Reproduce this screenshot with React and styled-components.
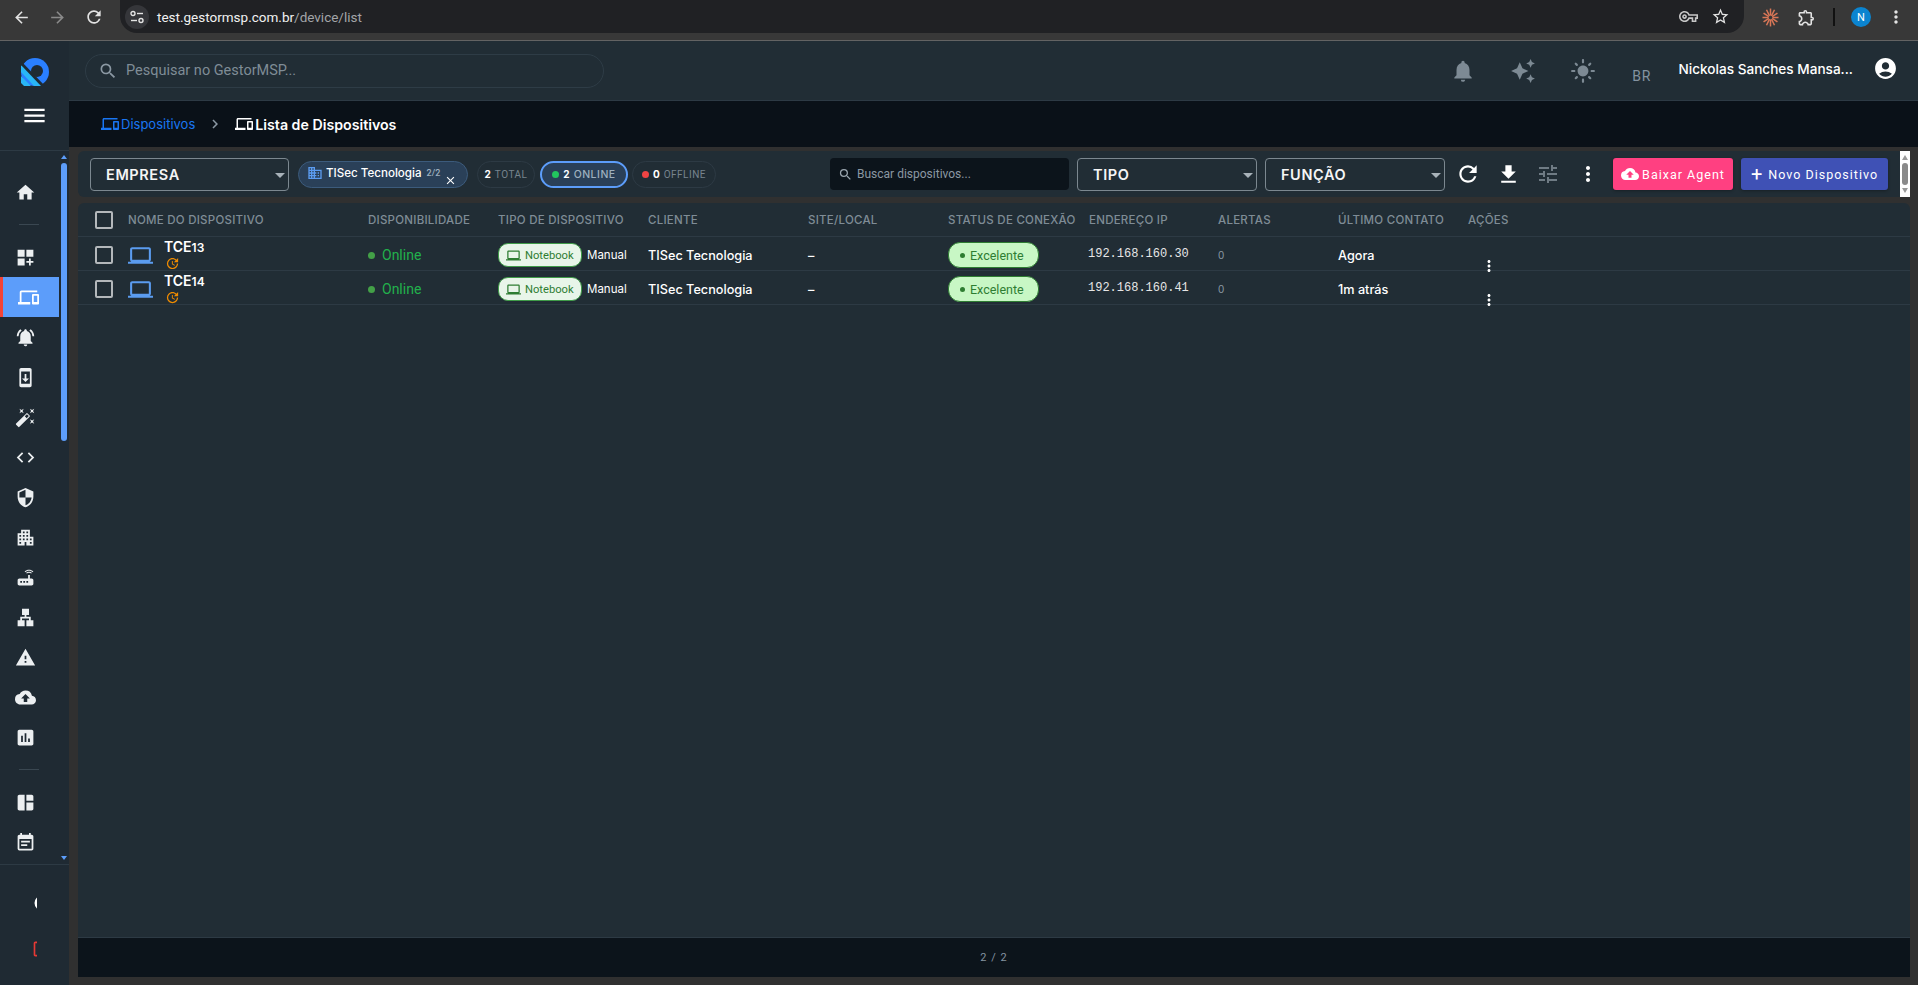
import React from "react";
import styled, { createGlobalStyle } from "styled-components";
import {
  MdAccountCircle,
  MdApartment,
  MdArrowBack,
  MdArrowForward,
  MdAssessment,
  MdAutoAwesome,
  MdAutoFixHigh,
  MdChevronRight,
  MdClose,
  MdCloudUpload,
  MdCode,
  MdDarkMode,
  MdDashboardCustomize,
  MdDevices,
  MdDomain,
  MdEventNote,
  MdFileDownload,
  MdHome,
  MdLan,
  MdLaptop,
  MdLightMode,
  MdLogout,
  MdMenu,
  MdMoreVert,
  MdNotifications,
  MdNotificationsActive,
  MdOutlineExtension,
  MdOutlineVpnKey,
  MdRefresh,
  MdRouter,
  MdSearch,
  MdSecurity,
  MdSpaceDashboard,
  MdStarBorder,
  MdSystemUpdate,
  MdTune,
  MdUpdate,
  MdWarning,
} from "react-icons/md";

const display = `"Inter", "Liberation Sans", sans-serif`;
const plain = `"Roboto", "Liberation Sans", sans-serif`;

const GlobalStyle = createGlobalStyle`
  html, body { margin: 0; padding: 0; height: 100%; background: #303030; overflow: hidden; }
  #root { height: 100%; }
  * { box-sizing: border-box; }
`;

const columns = "50px 240px 130px 150px 160px 140px 141px 129px 120px 130px 1fr";

const navTop = [
  { Icon: MdDashboardCustomize },
  { Icon: MdDevices, active: true },
  { Icon: MdNotificationsActive },
  { Icon: MdSystemUpdate },
  { Icon: MdAutoFixHigh },
  { Icon: MdCode },
  { Icon: MdSecurity },
  { Icon: MdApartment },
  { Icon: MdRouter },
  { Icon: MdLan },
  { Icon: MdWarning },
  { Icon: MdCloudUpload },
  { Icon: MdAssessment },
];

const devices = [
  { name: "TCE", num: "13", ip: "192.168.160.30", last: "Agora" },
  { name: "TCE", num: "14", ip: "192.168.160.41", last: "1m atrás" },
];

function Logo() {
  return (
    <svg width="28" height="28" viewBox="0 0 28 28">
      <circle cx="14" cy="14" r="14" fill="#2a7fff" />
      <path d="M0 3 L24 28 L16 28 L0 11 Z" fill="#1f2a33" />
      <circle cx="16" cy="13" r="6" fill="#1f2a33" />
      <path d="M0 7 L20 28 L13 28 L0 14 Z" fill="#29b6f6" />
      <path d="M0 18 L10 28 L3 28 L0 25 Z" fill="#29b6f6" />
      <path d="M0 0 L8 0 L0 8 Z" fill="#1f2a33" />
    </svg>
  );
}

function Burst() {
  const rays = Array.from({ length: 12 }, (_, i) => (i * Math.PI) / 6);
  return (
    <svg width="17" height="19" viewBox="0 0 18 20">
      {rays.map((a) => (
        <line
          key={a}
          x1={9 + Math.cos(a) * 2}
          y1={10 + Math.sin(a) * 2}
          x2={9 + Math.cos(a) * 8.5}
          y2={10 + Math.sin(a) * 9.5}
          stroke="#d97757"
          strokeWidth="1.6"
        />
      ))}
    </svg>
  );
}

function SiteTune() {
  return (
    <svg width="14" height="14" viewBox="0 0 14 14" fill="none" stroke="#e3e3e3" strokeWidth="1.4">
      <circle cx="3" cy="3.5" r="2" />
      <path d="M7 3.5 H13" />
      <circle cx="11" cy="10.5" r="2" />
      <path d="M1 10.5 H7" />
    </svg>
  );
}

export default function App() {
  return (
    <>
      <GlobalStyle />
      <Root>
        <ChromeBar>
          <ChromeNav>
            <MdArrowBack size={19} color="#e3e3e3" />
            <MdArrowForward size={19} color="#8a8a8a" />
            <MdRefresh size={20} color="#e3e3e3" />
          </ChromeNav>
          <Omnibox>
            <SiteInfo>
              <SiteTune />
            </SiteInfo>
            <Url>
              test.gestormsp.com.br<UrlPath>/device/list</UrlPath>
            </Url>
            <OmniActions>
              <MdOutlineVpnKey size={19} color="#c7c7c7" />
              <MdStarBorder size={19} color="#e3e3e3" />
            </OmniActions>
          </Omnibox>
          <ChromeTools>
            <Burst />
            <MdOutlineExtension size={19} color="#e3e3e3" />
            <ChromeDivider />
            <Avatar>N</Avatar>
            <MdMoreVert size={20} color="#e3e3e3" />
          </ChromeTools>
        </ChromeBar>
        <Body>
          <Sidebar>
            <SideHead>
              <Logo />
              <MdMenu size={27} color="#fff" />
            </SideHead>
            <SideScroll>
              <SideList>
                <SideItem>
                  <MdHome size={21} />
                </SideItem>
                <SideRule />
                {navTop.map(({ Icon, active }, i) => (
                  <SideItem key={i} $active={active}>
                    <Icon size={21} />
                  </SideItem>
                ))}
                <SideRule />
                <SideItem>
                  <MdSpaceDashboard size={21} />
                </SideItem>
                <SideItem>
                  <MdEventNote size={21} />
                </SideItem>
              </SideList>
              <ScrollTrack>
                <ArrowUp />
                <SideThumb />
                <ArrowDown />
              </ScrollTrack>
            </SideScroll>
            <SideFoot>
              <ClippedIcon>
                <MdDarkMode size={20} color="#fff" />
              </ClippedIcon>
              <ClippedIcon>
                <MdLogout size={20} color="#e53935" />
              </ClippedIcon>
            </SideFoot>
          </Sidebar>
          <Main>
            <TopBar>
              <SearchPill>
                <MdSearch size={20} color="#8b98a3" />
                <span>Pesquisar no GestorMSP...</span>
              </SearchPill>
              <TopIcons>
                <MdNotifications size={26} color="#7d8a94" />
                <MdAutoAwesome size={26} color="#7d8a94" />
                <MdLightMode size={26} color="#7d8a94" />
                <Lang>BR</Lang>
                <UserName>Nickolas Sanches Mansa...</UserName>
                <ProfileIcon size={25} color="#fff" />
              </TopIcons>
            </TopBar>
            <Breadcrumb>
              <Crumb $link>
                <MdDevices size={18} />
                Dispositivos
              </Crumb>
              <MdChevronRight size={18} color="#8b98a3" />
              <Crumb>
                <MdDevices size={18} />
                Lista de Dispositivos
              </Crumb>
            </Breadcrumb>
            <Content>
              <Toolbar>
                <SelectBox $width={199}>EMPRESA</SelectBox>
                <CompanyChip>
                  <MdDomain size={16} color="#5b9cf0" />
                  <span>TISec Tecnologia</span>
                  <ChipCount>2/2</ChipCount>
                  <ChipClose>
                    <MdClose size={13} />
                  </ChipClose>
                </CompanyChip>
                <StatChip $width={58} $left={9}>
                  <StatNum>2</StatNum>
                  <StatLabel>TOTAL</StatLabel>
                </StatChip>
                <StatChip $width={88} $left={5} $selected>
                  <Dot $color="#22c55e" />
                  <StatNum>2</StatNum>
                  <StatLabel $strong>ONLINE</StatLabel>
                </StatChip>
                <StatChip $width={84} $left={4}>
                  <Dot $color="#ef4444" />
                  <StatNum>0</StatNum>
                  <StatLabel>OFFLINE</StatLabel>
                </StatChip>
                <DeviceSearch>
                  <MdSearch size={15} color="#9aa5ae" />
                  <span>Buscar dispositivos...</span>
                </DeviceSearch>
                <SelectBox $width={180} $left={8}>TIPO</SelectBox>
                <SelectBox $width={180} $left={8}>FUNÇÃO</SelectBox>
                <ToolIcons>
                  <ToolIcon>
                    <MdRefresh size={26} color="#fff" />
                  </ToolIcon>
                  <ToolIcon>
                    <MdFileDownload size={25} color="#fff" />
                  </ToolIcon>
                  <ToolIcon>
                    <MdTune size={24} color="#6f7b84" />
                  </ToolIcon>
                  <ToolIcon>
                    <MdMoreVert size={24} color="#fff" />
                  </ToolIcon>
                </ToolIcons>
                <ActionButton $bg="#ff4081" $width={120}>
                  <MdCloudUpload size={18} />
                  Baixar Agent
                </ActionButton>
                <ActionButton $bg="#3f51b5" $width={147}>
                  <PlusSign>+</PlusSign>
                  Novo Dispositivo
                </ActionButton>
                <MiniScroll>
                  <MiniArrow $up />
                  <MiniThumb />
                  <MiniArrow />
                </MiniScroll>
              </Toolbar>
              <TablePanel>
                <HeadRow>
                  <CheckCell>
                    <Check />
                  </CheckCell>
                  <HeadCell>Nome do Dispositivo</HeadCell>
                  <HeadCell>Disponibilidade</HeadCell>
                  <HeadCell>Tipo de Dispositivo</HeadCell>
                  <HeadCell>Cliente</HeadCell>
                  <HeadCell>Site/Local</HeadCell>
                  <HeadCell>Status de Conexão</HeadCell>
                  <HeadCell>Endereço IP</HeadCell>
                  <HeadCell>Alertas</HeadCell>
                  <HeadCell>Último Contato</HeadCell>
                  <HeadCell>Ações</HeadCell>
                </HeadRow>
                {devices.map((d) => (
                  <Row key={d.ip}>
                    <CheckCell>
                      <Check />
                    </CheckCell>
                    <NameCell>
                      <MdLaptop size={25} color="#5b9cf0" />
                      <NameStack>
                        <DeviceName>
                          {d.name}
                          <small>{d.num}</small>
                        </DeviceName>
                        <MdUpdate size={15} color="#f08c00" />
                      </NameStack>
                    </NameCell>
                    <OnlineCell>
                      <Dot $color="#43a047" />
                      Online
                    </OnlineCell>
                    <TypeCell>
                      <TypePill>
                        <MdLaptop size={15} />
                        Notebook
                      </TypePill>
                      <BodyText>Manual</BodyText>
                    </TypeCell>
                    <TextCell>TISec Tecnologia</TextCell>
                    <TextCell>–</TextCell>
                    <div>
                      <StatusPill>
                        <Dot $color="#2e7d32" $small />
                        Excelente
                      </StatusPill>
                    </div>
                    <IpCell>{d.ip}</IpCell>
                    <AlertCell>0</AlertCell>
                    <TextCell>{d.last}</TextCell>
                    <MenuCell>
                      <MdMoreVert size={18} color="#fff" />
                    </MenuCell>
                  </Row>
                ))}
                <Spacer />
                <Footer>2 / 2</Footer>
              </TablePanel>
            </Content>
          </Main>
        </Body>
      </Root>
    </>
  );
}

const Root = styled.div`
  display: flex;
  flex-direction: column;
  height: 985px;
  background: #303030;
  font-family: ${plain};
`;

const ChromeBar = styled.div`
  display: flex;
  align-items: flex-start;
  height: 41px;
  flex: none;
  background: #383838;
  border-bottom: 1px solid #636363;
`;

const ChromeNav = styled.div`
  display: flex;
  align-items: center;
  gap: 17px;
  width: 120px;
  height: 34px;
  padding-left: 12px;
`;

const Omnibox = styled.div`
  display: flex;
  align-items: center;
  width: 1624px;
  height: 33px;
  padding: 0 14px 0 5px;
  background: #202124;
  border-radius: 0 0 17px 17px;
`;

const SiteInfo = styled.div`
  display: flex;
  align-items: center;
  justify-content: center;
  width: 24px;
  height: 24px;
  border-radius: 50%;
  background: #35363a;
`;

const Url = styled.div`
  margin-left: 8px;
  color: #f1f1f1;
  font-size: 13.5px;
`;

const UrlPath = styled.span`
  color: #a3a5a8;
`;

const OmniActions = styled.div`
  display: flex;
  align-items: center;
  gap: 13px;
  margin-left: auto;
`;

const ChromeTools = styled.div`
  display: flex;
  align-items: center;
  height: 34px;
  padding-left: 18px;
  gap: 18px;
`;

const ChromeDivider = styled.div`
  width: 2px;
  height: 18px;
  margin: 0 -2px 0 -1px;
  background: #111;
`;

const Avatar = styled.div`
  display: flex;
  align-items: center;
  justify-content: center;
  width: 20px;
  height: 20px;
  margin-right: -3px;
  border-radius: 50%;
  background: #0b84d0;
  color: #fff;
  font-size: 11px;
`;

const Body = styled.div`
  display: flex;
  flex: 1;
  min-height: 0;
`;

const Sidebar = styled.aside`
  display: flex;
  flex-direction: column;
  width: 69px;
  flex: none;
  background: #1f2a33;
`;

const SideHead = styled.div`
  display: flex;
  flex-direction: column;
  align-items: center;
  gap: 16px;
  height: 110px;
  padding-top: 17px;
  flex: none;
  border-bottom: 1px solid #2d3a44;
`;

const SideScroll = styled.div`
  display: flex;
  height: 714px;
  flex: none;
  border-bottom: 1px solid #2d3a44;
  overflow: hidden;
`;

const SideList = styled.div`
  display: flex;
  flex-direction: column;
  width: 61px;
  padding-top: 21px;
`;

const SideItem = styled.div`
  display: flex;
  align-items: center;
  justify-content: center;
  flex: none;
  width: 59px;
  height: 40px;
  padding-right: ${(p) => (p.$active ? "6px" : "9px")};
  color: #eceff1;
  background: ${(p) => (p.$active ? "#5c9dfa" : "transparent")};
  border-left: ${(p) => (p.$active ? "3px solid #f44336" : "none")};
  svg {
    color: ${(p) => (p.$active ? "#fff" : "#eceff1")};
  }
`;

const SideRule = styled.div`
  flex: none;
  width: 20px;
  height: 1px;
  margin: 12px 0 12px 19px;
  background: #3a4751;
`;

const ScrollTrack = styled.div`
  display: flex;
  flex-direction: column;
  align-items: center;
  width: 6px;
  padding-top: 4px;
`;

const ArrowUp = styled.div`
  border-left: 3px solid transparent;
  border-right: 3px solid transparent;
  border-bottom: 4px solid #5c9dfa;
`;

const ArrowDown = styled.div`
  margin-top: auto;
  margin-bottom: 4px;
  border-left: 3px solid transparent;
  border-right: 3px solid transparent;
  border-top: 4px solid #5c9dfa;
`;

const SideThumb = styled.div`
  width: 6px;
  height: 278px;
  margin-top: 4px;
  border-radius: 3px;
  background: #5c9dfa;
`;

const SideFoot = styled.div`
  display: flex;
  flex-direction: column;
  gap: 26px;
  padding-top: 28px;
`;

const ClippedIcon = styled.div`
  width: 5px;
  height: 20px;
  margin-left: 32px;
  overflow: hidden;
  svg {
    display: block;
  }
`;

const Main = styled.main`
  display: flex;
  flex-direction: column;
  flex: 1;
  min-width: 0;
`;

const TopBar = styled.header`
  display: flex;
  align-items: center;
  height: 60px;
  flex: none;
  padding-left: 16px;
  background: #212d35;
  border-bottom: 1px solid #2d3a44;
`;

const SearchPill = styled.div`
  display: flex;
  align-items: center;
  gap: 8px;
  width: 519px;
  height: 34px;
  padding-left: 12px;
  border: 1px solid #2e3c46;
  border-radius: 17px;
  color: #7f8c96;
  font-size: 14.5px;
`;

const TopIcons = styled.div`
  display: flex;
  align-items: center;
  margin-left: auto;
  padding-right: 20px;
  gap: 34px;
`;

const Lang = styled.div`
  margin: 10px -7px 0 2px;
  color: #8493a0;
  font-size: 14px;
  letter-spacing: 1px;
`;

const UserName = styled.div`
  margin: -4px -14px 0 0;
  color: #fff;
  font-family: ${display};
  font-size: 13.6px;
  font-weight: 500;
`;

const ProfileIcon = styled(MdAccountCircle)`
  margin-top: -4px;
`;

const Breadcrumb = styled.nav`
  display: flex;
  align-items: center;
  height: 46px;
  flex: none;
  padding-left: 32px;
  gap: 11px;
  background: #0a1118;
`;

const Crumb = styled.div`
  display: flex;
  align-items: center;
  gap: 2px;
  color: ${(p) => (p.$link ? "#1976f2" : "#fff")};
  font-family: ${display};
  font-size: ${(p) => (p.$link ? "13px" : "14.2px")};
  font-weight: ${(p) => (p.$link ? 400 : 600)};
`;

const Content = styled.div`
  display: flex;
  flex-direction: column;
  flex: 1;
  min-height: 0;
  gap: 6px;
  padding: 4px 8px 8px 9px;
`;

const Toolbar = styled.div`
  display: flex;
  align-items: center;
  height: 46px;
  flex: none;
  padding-left: 12px;
  background: #212d35;
  border-radius: 6px;
`;

const SelectBox = styled.div`
  position: relative;
  display: flex;
  align-items: center;
  flex: none;
  width: ${(p) => p.$width}px;
  height: 33px;
  margin-left: ${(p) => p.$left || 0}px;
  padding-left: 15px;
  border: 1px solid #7c8890;
  border-radius: 4px;
  color: #f5f5f5;
  font-family: ${display};
  font-size: 14.5px;
  font-weight: 600;
  letter-spacing: 0.6px;
  &::after {
    content: "";
    position: absolute;
    right: 3px;
    top: 14px;
    border-left: 5px solid transparent;
    border-right: 5px solid transparent;
    border-top: 5px solid #a8b2b9;
  }
`;

const CompanyChip = styled.div`
  position: relative;
  display: flex;
  align-items: center;
  flex: none;
  gap: 3px;
  width: 170px;
  height: 27px;
  margin-left: 9px;
  padding: 0 0 2px 8px;
  background: #2a4058;
  border: 1px solid #3c5b7c;
  border-radius: 14px;
  color: #fff;
  font-family: ${display};
  font-size: 11.6px;
  font-weight: 500;
  white-space: nowrap;
`;

const ChipCount = styled.span`
  margin-left: 2px;
  color: #9fb0bf;
  font-family: ${plain};
  font-size: 9px;
`;

const ChipClose = styled.span`
  position: absolute;
  right: 10px;
  bottom: 0;
  display: flex;
  color: #fff;
`;

const StatChip = styled.div`
  display: flex;
  align-items: center;
  justify-content: center;
  flex: none;
  gap: 4px;
  width: ${(p) => p.$width}px;
  height: 27px;
  margin-left: ${(p) => p.$left}px;
  background: ${(p) => (p.$selected ? "#2a4058" : "transparent")};
  border: ${(p) => (p.$selected ? "2px solid #5c9dfa" : "1px solid #2d3a44")};
  border-radius: 14px;
`;

const StatNum = styled.span`
  color: #fff;
  font-family: ${display};
  font-size: 10px;
  font-weight: 700;
`;

const StatLabel = styled.span`
  color: ${(p) => (p.$strong ? "#9fb0bf" : "#77848e")};
  font-family: ${(p) => (p.$strong ? display : plain)};
  font-size: ${(p) => (p.$strong ? "10.5px" : "10px")};
  font-weight: ${(p) => (p.$strong ? 500 : 400)};
  letter-spacing: 0.5px;
`;

const Dot = styled.span`
  display: inline-block;
  flex: none;
  width: ${(p) => (p.$small ? "5px" : "7px")};
  height: ${(p) => (p.$small ? "5px" : "7px")};
  border-radius: 50%;
  background: ${(p) => p.$color};
`;

const DeviceSearch = styled.div`
  display: flex;
  align-items: center;
  flex: none;
  gap: 4px;
  width: 239px;
  height: 32px;
  margin-left: 114px;
  padding-left: 8px;
  background: #0c141b;
  border-radius: 4px;
  color: #8b98a3;
  font-size: 12px;
`;

const ToolIcons = styled.div`
  display: flex;
  margin: 0 5px 0 3px;
`;

const ToolIcon = styled.div`
  display: flex;
  align-items: center;
  justify-content: center;
  width: 40px;
  height: 32px;
`;

const ActionButton = styled.div`
  display: flex;
  align-items: center;
  justify-content: center;
  flex: none;
  gap: 3px;
  width: ${(p) => p.$width}px;
  height: 32px;
  margin-right: 8px;
  background: ${(p) => p.$bg};
  border-radius: 3px;
  color: #fff;
  font-size: 12.5px;
  font-weight: 400;
  letter-spacing: 1px;
  box-shadow: 0 1px 3px rgba(0, 0, 0, 0.3);
`;

const PlusSign = styled.span`
  font-size: 20px;
  font-weight: 400;
  line-height: 1;
  margin-right: 2px;
`;

const MiniScroll = styled.div`
  display: flex;
  flex-direction: column;
  align-items: center;
  justify-content: space-between;
  align-self: stretch;
  width: 10px;
  margin-left: auto;
  padding: 4px 0;
  background: #fff;
`;

const MiniArrow = styled.div`
  border-left: 3px solid transparent;
  border-right: 3px solid transparent;
  border-top: ${(p) => (p.$up ? "none" : "5px solid #9a9a9a")};
  border-bottom: ${(p) => (p.$up ? "5px solid #9a9a9a" : "none")};
`;

const MiniThumb = styled.div`
  width: 6px;
  height: 22px;
  border-radius: 3px;
  background: #8a8a8a;
`;

const TablePanel = styled.section`
  display: flex;
  flex-direction: column;
  flex: 1;
  min-height: 0;
  background: #212d35;
  border-radius: 6px 6px 0 0;
  overflow: hidden;
`;

const HeadRow = styled.div`
  display: grid;
  grid-template-columns: ${columns};
  align-items: center;
  height: 34px;
  flex: none;
  border-bottom: 1px solid #2d3a44;
`;

const Row = styled(HeadRow)`
  padding-top: 2px;
`;

const HeadCell = styled.div`
  color: #7f8c96;
  font-family: ${display};
  font-size: 11.5px;
  font-weight: 500;
  letter-spacing: 0.25px;
  text-transform: uppercase;
  white-space: nowrap;
`;

const CheckCell = styled.div`
  display: flex;
  padding-left: 17px;
`;

const Check = styled.div`
  width: 18px;
  height: 18px;
  border: 2px solid #b4b8bb;
  border-radius: 2px;
`;

const NameCell = styled.div`
  display: flex;
  align-items: center;
  gap: 11px;
`;

const NameStack = styled.div`
  display: flex;
  flex-direction: column;
  align-items: flex-start;
  margin-top: -1px;
  svg {
    margin-left: 1px;
  }
`;

const DeviceName = styled.div`
  color: #fff;
  font-family: ${display};
  font-size: 14px;
  font-weight: 600;
  line-height: 17px;
  small {
    font-size: 12px;
  }
`;

const OnlineCell = styled.div`
  display: flex;
  align-items: center;
  gap: 7px;
  color: #22b14c;
  font-size: 14px;
`;

const TypeCell = styled.div`
  display: flex;
  align-items: center;
  gap: 5px;
`;

const TypePill = styled.div`
  display: flex;
  align-items: center;
  gap: 4px;
  flex: none;
  width: 84px;
  height: 24px;
  padding-left: 7px;
  background: #e8f5e9;
  border: 1px solid #3f9b48;
  border-radius: 10px;
  color: #2e7d32;
  font-size: 11.2px;
`;

const BodyText = styled.span`
  color: #fff;
  font-family: ${display};
  font-size: 11.5px;
`;

const TextCell = styled.div`
  color: #fff;
  font-family: ${display};
  font-size: 12.7px;
  font-weight: 500;
  white-space: nowrap;
`;

const StatusPill = styled.div`
  display: inline-flex;
  align-items: center;
  gap: 5px;
  width: 91px;
  height: 26px;
  padding-left: 11px;
  background: #c8f7c5;
  border: 1px solid #2e7d32;
  border-radius: 12px;
  color: #2e7d32;
  font-size: 12.5px;
`;

const IpCell = styled.div`
  margin: -3px 0 0 -1px;
  color: #e6e6e6;
  font-family: "Liberation Mono", monospace;
  font-size: 12px;
`;

const AlertCell = styled.div`
  color: #8a98a3;
  font-family: ${display};
  font-size: 10px;
`;

const MenuCell = styled.div`
  display: flex;
  align-self: end;
  margin-bottom: -4px;
  padding-left: 12px;
`;

const Spacer = styled.div`
  flex: 1;
`;

const Footer = styled.footer`
  display: flex;
  align-items: center;
  justify-content: center;
  height: 40px;
  flex: none;
  background: #0c141b;
  border-top: 1px solid #2d3a44;
  color: #8493a0;
  font-size: 11px;
  letter-spacing: 1px;
`;
